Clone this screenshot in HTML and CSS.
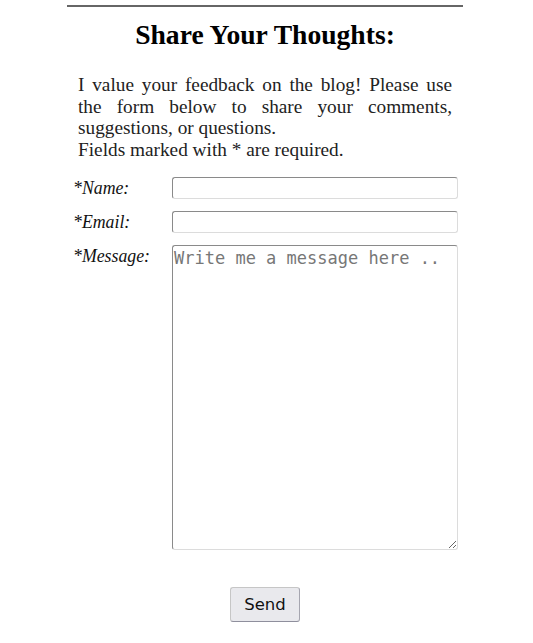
FILE: index.html
```html
<!DOCTYPE html>
<html>
<head>
<meta charset="utf-8">
<link rel="stylesheet" href="styles.css">
</head>
<body>
<div class="page">
  <hr class="rule">
  <h2 class="title">Share Your Thoughts:</h2>
  <p class="intro">I value your feedback on the blog! Please use the form below to share your comments, suggestions, or questions.<br>Fields marked with * are required.</p>
  <form class="form">
    <label class="label" for="name">*Name:</label>
    <input class="field" id="name" type="text">
    <label class="label" for="email">*Email:</label>
    <input class="field" id="email" type="email">
    <label class="label" for="msg">*Message:</label>
    <textarea class="area" id="msg" placeholder="Write me a message here .."></textarea>
    <div class="actions"><button class="send" type="button">Send</button></div>
  </form>
</div>
</body>
</html>
```
FILE: styles.css
```css
html, body { margin: 0; padding: 0; background: #fff; }
body { font-family: "Liberation Serif", serif; color: #222; }
.page { width: 396px; margin: 0 0 0 67px; padding-top: 5px; }
.rule { margin: 0; border: 0; height: 2px; background: #666; }
.title { margin: 14px 0 0; text-align: center; font-size: 27.6px; font-weight: bold; color: #000; line-height: 28px; }
.intro { margin: 25px 11px 0; font-size: 19.3px; line-height: 21.7px; text-align: justify; color: #222; }
.form { display: grid; grid-template-columns: 99px 286px; row-gap: 12px; margin-top: 16px; margin-left: 6px; }
.label { font-style: italic; font-size: 17.8px; line-height: 22px; color: #111; }
.field { box-sizing: border-box; height: 22px; width: 286px; margin: 0; border: 1px solid; border-color: #8a8a8a #dcdcdc #dcdcdc #8a8a8a; border-radius: 3px; padding: 1px 3px; }
.area { box-sizing: border-box; height: 305px; width: 286px; margin: 0; border: 1px solid; border-color: #8a8a8a #dcdcdc #dcdcdc #8a8a8a; border-radius: 3px; padding: 2px 1px; font-family: "DejaVu Sans Mono", monospace; font-size: 17px; resize: vertical; }
.area::placeholder { color: #777; }
.actions { grid-column: 1 / -1; display: flex; justify-content: center; padding-top: 25px; margin-left: -1px; }
.send { width: 70px; height: 35px; font-family: "DejaVu Sans", sans-serif; font-size: 16.5px; background: #e9e9ed; border: 1px solid #c6c6c6; border-bottom-color: #8f8f9d; border-right-color: #a6a6b0; border-radius: 3px; color: #111; padding: 0; }
```
